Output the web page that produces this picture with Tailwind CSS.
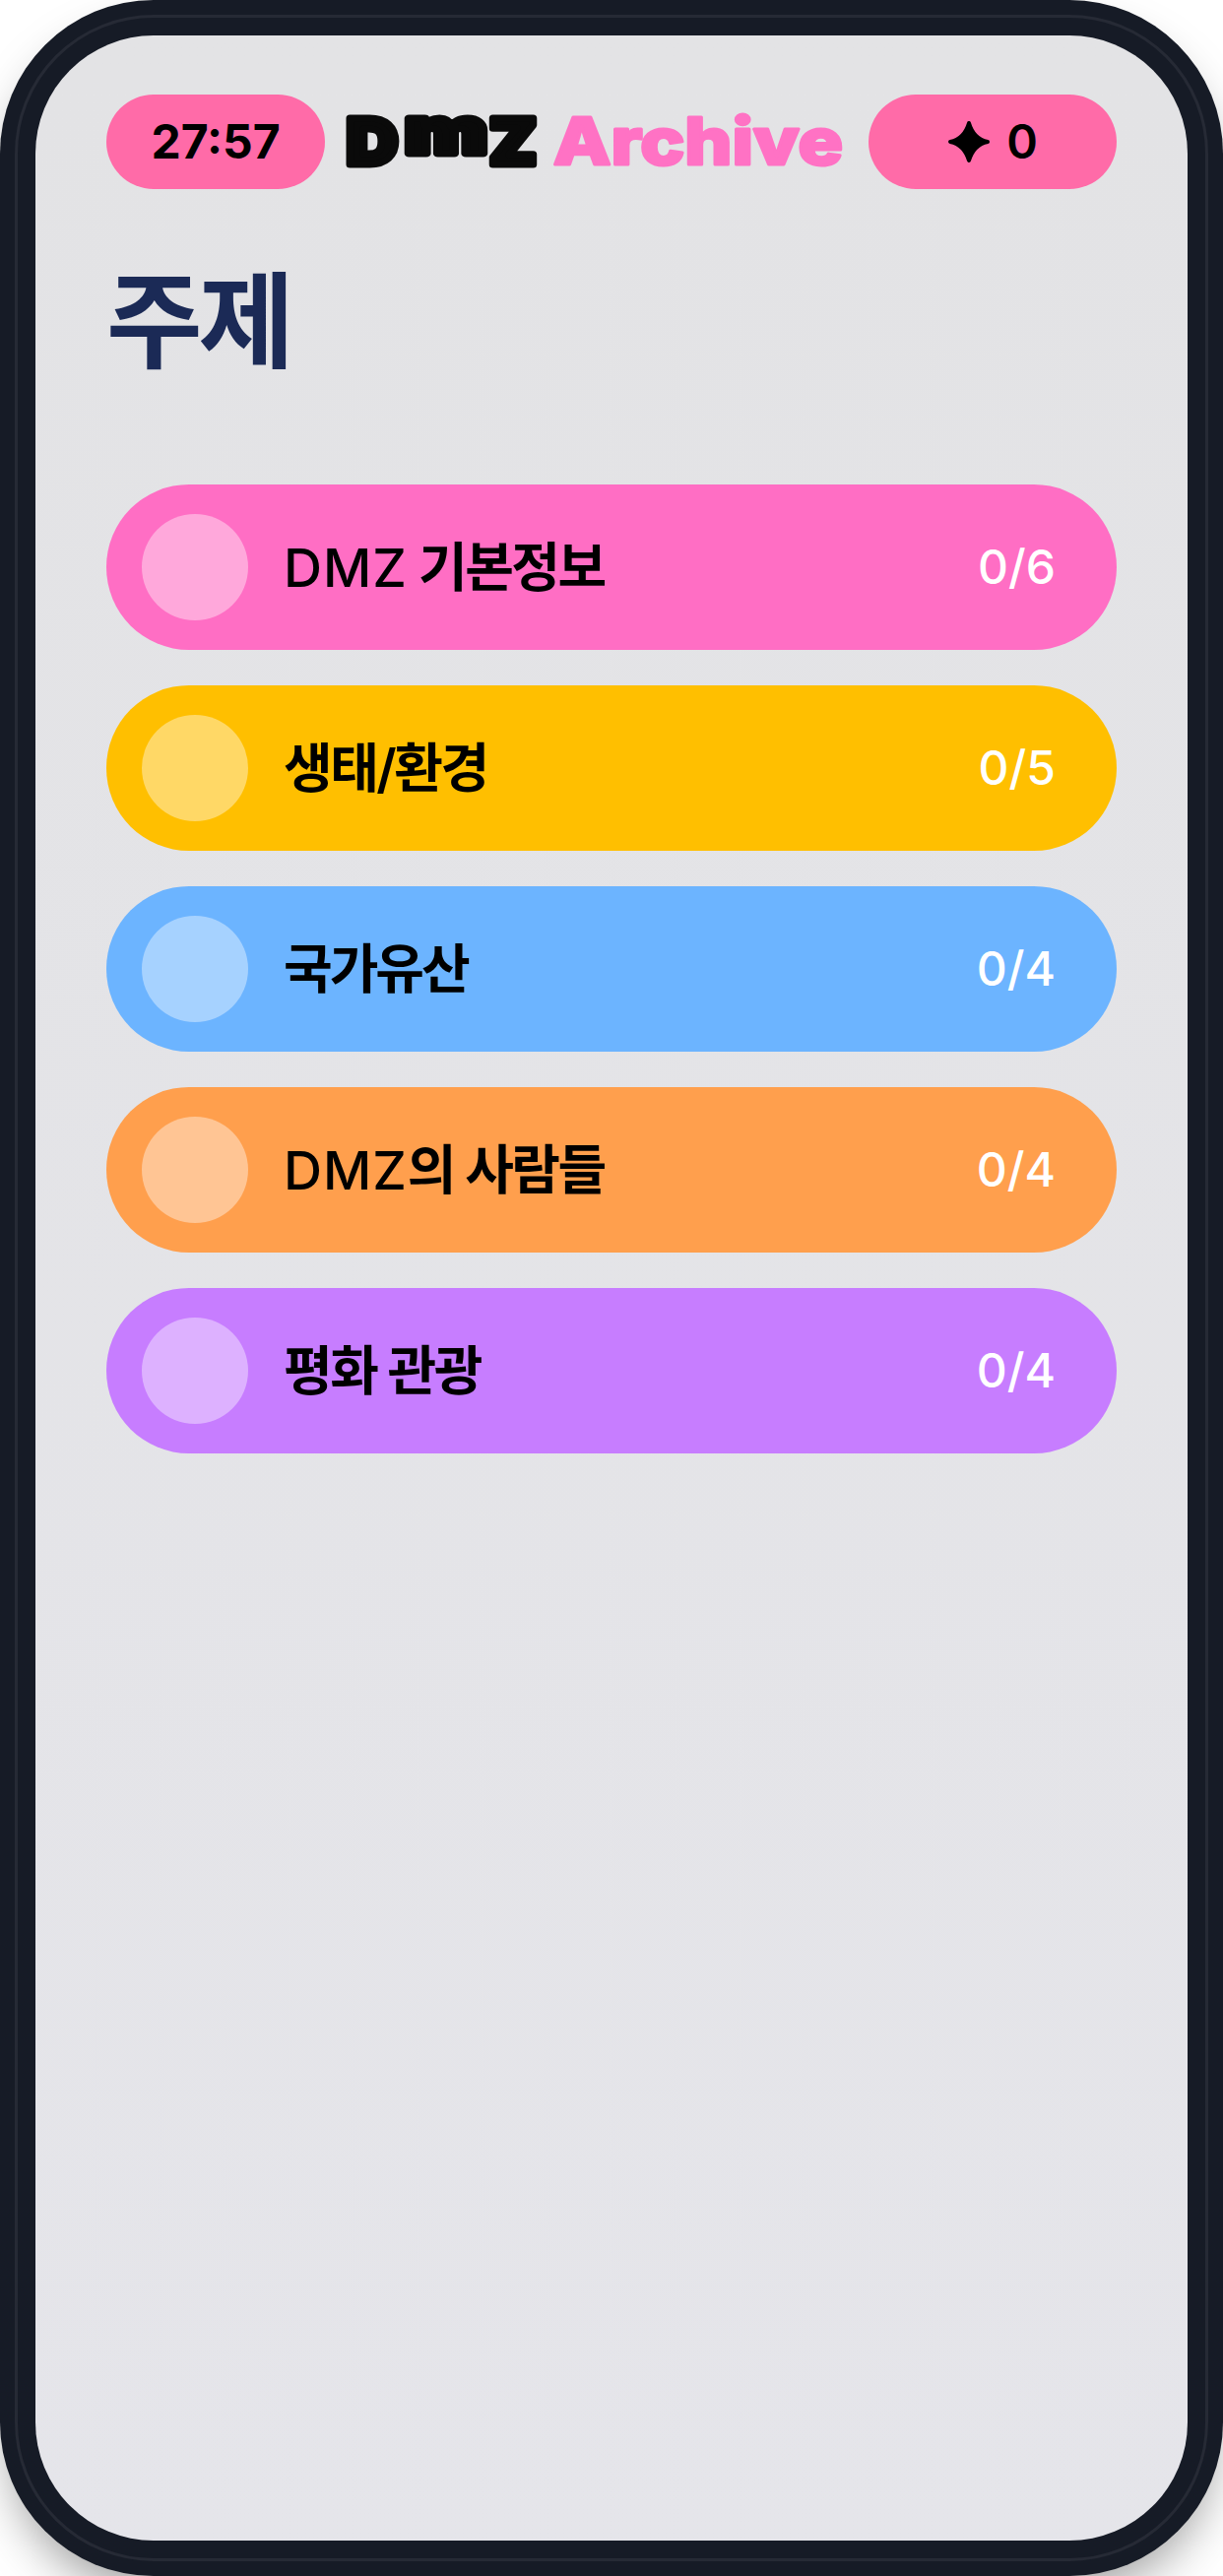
<!DOCTYPE html>
<html lang="ko">
<head>
  <meta charset="UTF-8">
  <meta name="viewport" content="width=device-width, initial-scale=1.0">
  <script src="https://cdn.jsdelivr.net/npm/@tailwindcss/browser@4"></script>
  <title>DMZ Archive</title>
</head>
<body class="bg-white overflow-hidden font-['Inter','Noto_Sans_CJK_KR',sans-serif]">
  <!-- phone frame -->
  <div class="w-[1242px] h-[2616px] p-[15px] bg-[#161b26] rounded-[156px] shadow-[0_25px_50px_-12px_rgba(0,0,0,0.4)]">
    <div class="h-full border-[3px] border-[#262a35] rounded-[141px] p-[18px]">
      <div class="h-full rounded-[120px] bg-gradient-to-b from-[#e3e3e5] to-[#e5e5ea] px-[72px] pt-[60px]">

        <!-- header -->
        <div class="flex items-center justify-between h-[96px]">
          <div class="w-[222px] h-[96px] rounded-full bg-[#ff6ba8] flex items-center justify-center text-[48px] font-bold text-black">27:57</div>
          <svg class="w-[510px] h-[130px] -my-[17px]" viewBox="0 -17 510 130">
            <g font-family="Inter" font-weight="900" fill="#0a0a0a" stroke="#0a0a0a" stroke-width="7" stroke-linejoin="round">
              <text x="1" y="71" font-size="65" textLength="52" lengthAdjust="spacingAndGlyphs">D</text>
              <text class="lowercase" x="60" y="60" font-size="66" textLength="84" lengthAdjust="spacingAndGlyphs">M</text>
              <text x="146" y="71" font-size="65" textLength="48" lengthAdjust="spacingAndGlyphs">Z</text>
            </g>
            <text x="211" y="71" font-family="Inter" font-weight="800" font-size="66" fill="#ff72c4" stroke="#ff72c4" stroke-width="3" stroke-linejoin="round" textLength="294" lengthAdjust="spacingAndGlyphs">Archive</text>
          </svg>
          <div class="w-[252px] h-[96px] rounded-full bg-[#ff6ba8] flex items-center justify-center gap-[16px] text-[48px] font-semibold text-black">
            <svg class="w-[44px] h-[44px]" viewBox="0 0 44 44"><path d="M22 3C25 13 31 20 41 22C31 24 25 31 22 41C19 31 13 24 3 22C13 20 19 13 22 3Z" fill="#000" stroke="#000" stroke-width="4" stroke-linejoin="round"/></svg>
            <span>0</span>
          </div>
        </div>

        <h1 class="mt-[62px] text-[106px] leading-[130px] tracking-[-4px] font-bold text-[#1b2a56] font-['Noto_Sans_CJK_KR',sans-serif]">주제</h1>

        <!-- topics -->
        <div class="mt-[108px] flex flex-col gap-[36px]">
          <div class="h-[168px] rounded-[84px] bg-[#ff6ec4] pl-[36px] pr-[62px] flex items-center">
            <div class="w-[108px] h-[108px] rounded-full bg-white/40"></div>
            <span class="ml-[36px] flex-1 text-[54px] font-semibold tracking-[-2.5px] text-black"><span class="font-medium tracking-[1px]">DMZ</span> 기본정보</span>
            <span class="text-[48px] font-medium text-white">0/6</span>
          </div>
          <div class="h-[168px] rounded-[84px] bg-[#ffbf00] pl-[36px] pr-[62px] flex items-center">
            <div class="w-[108px] h-[108px] rounded-full bg-white/40"></div>
            <span class="ml-[36px] flex-1 text-[54px] font-semibold tracking-[-2.5px] text-black">생태/환경</span>
            <span class="text-[48px] font-medium text-white">0/5</span>
          </div>
          <div class="h-[168px] rounded-[84px] bg-[#6cb4ff] pl-[36px] pr-[62px] flex items-center">
            <div class="w-[108px] h-[108px] rounded-full bg-white/40"></div>
            <span class="ml-[36px] flex-1 text-[54px] font-semibold tracking-[-3px] text-black">국가유산</span>
            <span class="text-[48px] font-medium text-white">0/4</span>
          </div>
          <div class="h-[168px] rounded-[84px] bg-[#ff9f4d] pl-[36px] pr-[62px] flex items-center">
            <div class="w-[108px] h-[108px] rounded-full bg-white/40"></div>
            <span class="ml-[36px] flex-1 text-[54px] font-semibold tracking-[-2.5px] text-black"><span class="font-medium tracking-[1px]">DMZ</span>의 사람들</span>
            <span class="text-[48px] font-medium text-white">0/4</span>
          </div>
          <div class="h-[168px] rounded-[84px] bg-[#c77dff] pl-[36px] pr-[62px] flex items-center">
            <div class="w-[108px] h-[108px] rounded-full bg-white/40"></div>
            <span class="ml-[36px] flex-1 text-[54px] font-semibold tracking-[-2.5px] text-black">평화 관광</span>
            <span class="text-[48px] font-medium text-white">0/4</span>
          </div>
        </div>

      </div>
    </div>
  </div>
</body>
</html>
